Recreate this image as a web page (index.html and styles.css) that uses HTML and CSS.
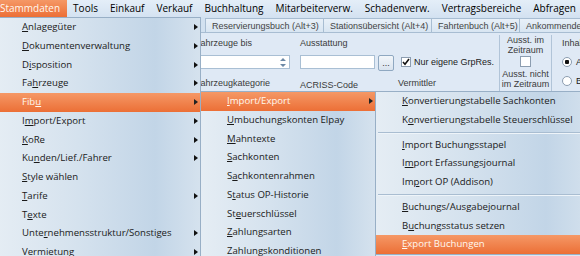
FILE: index.html
```html
<!DOCTYPE html>
<html lang="de">
<head>
    <meta charset="UTF-8">
    <title>Stammdaten - Fibu</title>
    <link rel="stylesheet" href="styles.css">
</head>
<body>
    <div class="menubar">
        <span class="bar-item open">Stammdaten</span>
        <span class="bar-item">Tools</span>
        <span class="bar-item">Einkauf</span>
        <span class="bar-item">Verkauf</span>
        <span class="bar-item">Buchhaltung</span>
        <span class="bar-item">Mitarbeiterverw.</span>
        <span class="bar-item">Schadenverw.</span>
        <span class="bar-item">Vertragsbereiche</span>
        <span class="bar-item">Abfragen</span>
        <span class="bar-item">Programm</span>
    </div>

    <div class="tabs">
        <span class="tab tab-res">Reservierungsbuch (Alt+3)</span>
        <span class="tab tab-station">Stationsübersicht (Alt+4)</span>
        <span class="tab tab-trips">Fahrtenbuch (Alt+5)</span>
        <span class="tab">Ankommende Fahrzeuge</span>
    </div>

    <div class="panel">
        <div class="col col-vehicle">
            <span class="label">Fahrzeuge bis</span>
            <div class="input spin">
                <svg width="6" height="9" viewBox="0 0 6 9"><path d="M3 0L6 3H0z M3 9L0 6h6z" fill="#6d89a6"/></svg>
            </div>
            <span class="label lower">Fahrzeugkategorie</span>
        </div>
        <div class="col col-equip">
            <span class="label">Ausstattung</span>
            <div class="input-row">
                <div class="input short"></div>
                <button class="dots">...</button>
            </div>
            <span class="label lower">ACRISS-Code</span>
        </div>
        <div class="col col-own">
            <span class="label">&nbsp;</span>
            <label class="check-row">
                <span class="checkbox">
                    <svg width="8" height="8" viewBox="0 0 8 8"><path d="M1 4l2 2.2L7 1" fill="none" stroke="#111" stroke-width="1.6"/></svg>
                </span>
                Nur eigene GrpRes.
            </label>
            <span class="label lower">Vermittler</span>
        </div>
        <div class="divider"></div>
        <div class="col col-period">
            <span>Ausst. im<br>Zeitraum</span>
            <span class="checkbox big"></span>
            <span>Ausst. nicht<br>im Zeitraum</span>
        </div>
        <div class="divider"></div>
        <div class="col col-content">
            <span class="label">Inhalt</span>
            <label class="radio-row"><span class="radio on"></span>Alle</label>
            <label class="radio-row"><span class="radio"></span>Buchungen</label>
        </div>
    </div>

    <ul class="menu menu-main">
        <li class="sub"><u>A</u>nlagegüter</li>
        <li class="sub"><u>D</u>okumentenverwaltung</li>
        <li class="sub">D<u>i</u>sposition</li>
        <li class="sub">Fa<u>h</u>rzeuge</li>
        <li class="sub hot">Fib<u>u</u></li>
        <li class="sub">I<u>m</u>port/Export</li>
        <li class="sub"><u>K</u>oRe</li>
        <li class="sub">Ku<u>n</u>den/Lief./Fahrer</li>
        <li><u>S</u>tyle wählen</li>
        <li class="sub"><u>T</u>arife</li>
        <li>T<u>e</u>xte</li>
        <li class="sub">Unte<u>r</u>nehmensstruktur/Sonstiges</li>
        <li class="sub"><u>V</u>ermietung</li>
    </ul>

    <ul class="menu menu-fibu">
        <li class="sub hot"><u>I</u>mport/Export</li>
        <li><u>U</u>mbuchungskonten Elpay</li>
        <li><u>M</u>ahntexte</li>
        <li><u>S</u>achkonten</li>
        <li>S<u>a</u>chkontenrahmen</li>
        <li>S<u>t</u>atus OP-Historie</li>
        <li>St<u>e</u>uerschlüssel</li>
        <li><u>Z</u>ahlungsarten</li>
        <li>Zahlungskonditionen</li>
    </ul>

    <ul class="menu menu-import">
        <li><u>K</u>onvertierungstabelle Sachkonten</li>
        <li>K<u>o</u>nvertierungstabelle Steuerschlüssel</li>
        <li class="sep"></li>
        <li><u>I</u>mport Buchungsstapel</li>
        <li>I<u>m</u>port Erfassungsjournal</li>
        <li>Im<u>p</u>ort OP (Addison)</li>
        <li class="sep"></li>
        <li><u>B</u>uchungs/Ausgabejournal</li>
        <li>B<u>u</u>chungsstatus setzen</li>
        <li class="hot"><u>E</u>xport Buchungen</li>
    </ul>
</body>
</html>
```

FILE: styles.css
```css
* {
    margin: 0;
    padding: 0;
    box-sizing: border-box;
}

body {
    width: 580px;
    height: 256px;
    overflow: hidden;
    position: relative;
    background: #dce8f4;
    font-family: 'Liberation Sans', Arial, sans-serif;
    font-size: 9px;
    color: #3a3a3a;
}

/* top menu bar */
.menubar {
    display: flex;
    height: 17px;
    background: linear-gradient(#e4eef8, #d4e2f1);
    font-family: 'Open Sans', sans-serif;
    font-size: 10px;
    color: #000;
    white-space: nowrap;
}

.bar-item {
    flex-shrink: 0;
    padding: 0 6px;
    line-height: 17px;
}

.bar-item:first-child {
    padding: 0 7px 0 0;
}

.bar-item.open {
    background: linear-gradient(#f59866, #ec6f36);
    color: #fff8f0;
}

/* tab strip */
.tabs {
    display: flex;
    height: 16px;
    padding: 1px 0 0 205px;
    background: #d2e1f0;
    border-bottom: 1px solid #a8bdd2;
    white-space: nowrap;
}

.tab {
    flex-shrink: 0;
    overflow: hidden;
    padding: 0 4px 0 6px;
    line-height: 14px;
    color: #444;
    background: linear-gradient(#e8f0f8, #d8e5f2);
    border: 1px solid #a8bdd2;
    border-bottom: none;
    margin-right: -1px;
}

.tab-res {
    width: 119px;
}

.tab-station {
    width: 109px;
}

.tab-trips {
    width: 89px;
}

/* form behind the menus */
.panel {
    display: flex;
    height: 70px;
    padding-left: 195px;
    background: #dfe9f5;
}

.col {
    flex-shrink: 0;
    display: flex;
    flex-direction: column;
    padding-top: 5px;
}

.label {
    line-height: 11px;
    white-space: nowrap;
}

.label.lower {
    margin-top: 9px;
}

.col-vehicle {
    width: 105px;
}

.col-equip {
    width: 98px;
}

.col-own {
    width: 101px;
}

.input {
    margin-top: 6px;
    width: 95px;
    height: 14px;
    background: #fff;
    border: 1px solid #a9bfd4;
}

.input.spin {
    display: flex;
    justify-content: flex-end;
    align-items: center;
    padding-right: 3px;
}

.input-row {
    display: flex;
    gap: 3px;
    margin-top: 6px;
}

.input-row .input {
    margin-top: 0;
}

.input.short {
    width: 75px;
}

.dots {
    width: 16px;
    height: 16px;
    font: 9px 'Liberation Sans', Arial, sans-serif;
    color: #333;
    line-height: 10px;
    background: linear-gradient(#f2f6fa, #d9e3ee);
    border: 1px solid #8fa8c1;
    border-radius: 2px;
}

.check-row {
    display: flex;
    align-items: center;
    gap: 3px;
    height: 14px;
    margin: 6px 0 0 3px;
    white-space: nowrap;
    color: #222;
}

.checkbox {
    flex-shrink: 0;
    display: flex;
    align-items: center;
    justify-content: center;
    width: 10px;
    height: 10px;
    background: #fff;
    border: 1px solid #8c9db0;
}

.checkbox.big {
    width: 11px;
    height: 11px;
    margin: 1px auto 2px;
}

.divider {
    flex-shrink: 0;
    width: 1px;
    margin-top: 2px;
    background: #b1c4d8;
}

.col-period {
    width: 51px;
    padding-top: 2px;
    text-align: center;
    line-height: 10px;
}

.col-content {
    width: 80px;
    padding-left: 10px;
}

.radio-row {
    display: flex;
    align-items: center;
    gap: 4px;
    height: 10px;
    margin-top: 8px;
    color: #222;
    white-space: nowrap;
}

.radio-row + .radio-row {
    margin-top: 9px;
}

.radio {
    flex-shrink: 0;
    width: 10px;
    height: 10px;
    border-radius: 50%;
    background: #fff;
    border: 1px solid #8c9db0;
}

.radio.on {
    background: radial-gradient(circle, #111 2px, #fff 2.5px);
}

/* drop-down menus */
.menu {
    position: absolute;
    z-index: 10;
    list-style: none;
    background: linear-gradient(to right, #e5edf4 0%, #d5e2ee 40%, #c2d5e7 78%, #d5e2ee 100%);
    border: 1px solid #98afc6;
    font-family: 'Open Sans', sans-serif;
    font-size: 9.6px;
    color: #1a1a1a;
    white-space: nowrap;
}

.menu li {
    position: relative;
    height: 18.75px;
    line-height: 18.75px;
    padding-left: 26px;
}

.menu li.sub::after {
    content: '';
    position: absolute;
    right: 2px;
    top: 6px;
    border-left: 4px solid #111;
    border-top: 3.5px solid transparent;
    border-bottom: 3.5px solid transparent;
}

.menu li.hot {
    background: linear-gradient(#f59866, #ec6f36);
    color: #fff8f0;
}

.menu li.hot::after {
    border-left-color: #222;
}

.menu li.sep {
    height: 6px;
    padding: 0;
    margin-left: 2px;
}

.menu li.sep::before {
    content: '';
    position: absolute;
    left: 0;
    right: 0;
    top: 2px;
    border-top: 1px solid #a9bdd1;
    border-bottom: 1px solid #eef4f9;
}

.menu u {
    text-underline-offset: 1px;
}

.menu-main {
    left: -5px;
    top: 17px;
    width: 206px;
}

.menu-fibu {
    left: 200px;
    top: 91px;
    width: 176px;
}

.menu-import {
    left: 375px;
    top: 91px;
    width: 220px;
}
```
